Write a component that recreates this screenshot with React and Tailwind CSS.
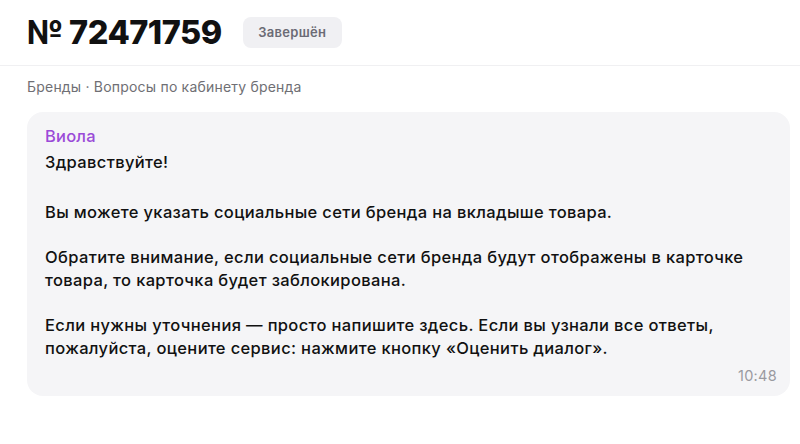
export default function App() {
  return (
    <main
      className="w-[800px] h-[444px] bg-white overflow-hidden"
      style={{ fontFamily: "Inter, 'Noto Sans', sans-serif" }}
    >
      <header className="flex items-center gap-[21px] px-[27px] h-[66px] border-b border-[#f0f0f2]">
        <h1 className="text-[32.5px] leading-[36px] font-extrabold text-[#111] tracking-[-0.5px]">№ 72471759</h1>
        <span className="h-[31px] w-[99px] flex items-center justify-center rounded-[8px] bg-[#f0f0f3] text-[13px] font-semibold tracking-[0.3px] text-[#6b6b75]">
          Завершён
        </span>
      </header>

      <div className="px-[27px] pt-[11px] text-[14px] leading-[20px] tracking-[0.2px] text-[#6f6f74]">
        Бренды · Вопросы по кабинету бренда
      </div>

      <section className="mx-[27px] mt-[15px] w-[763px] rounded-[16px] bg-[#f5f5f7] pl-[18px] pr-[13px] pt-[13px] pb-[10px]">
        <div className="text-[16.5px] leading-[22px] font-medium tracking-[0.2px] text-[#9b4bd8]">Виола</div>
        <div className="mt-[4px] text-[16.5px] leading-[23px] font-medium tracking-[0.35px] text-[#111]">
          <p className="mb-[27px]">Здравствуйте!</p>
          <p className="mb-[22px]">Вы можете указать социальные сети бренда на вкладыше товара.</p>
          <p className="mb-[22px]">
            Обратите внимание, если социальные сети бренда будут отображены в карточке товара, то карточка будет заблокирована.
          </p>
          <p>
            Если нужны уточнения — просто напишите здесь. Если вы узнали все ответы, пожалуйста, оцените сервис: нажмите кнопку «Оценить диалог».
          </p>
        </div>
        <div className="mt-[6px] text-right text-[14.5px] leading-[20px] tracking-[0.3px] text-[#9a9aa0]">10:48</div>
      </section>
    </main>
  )
}
